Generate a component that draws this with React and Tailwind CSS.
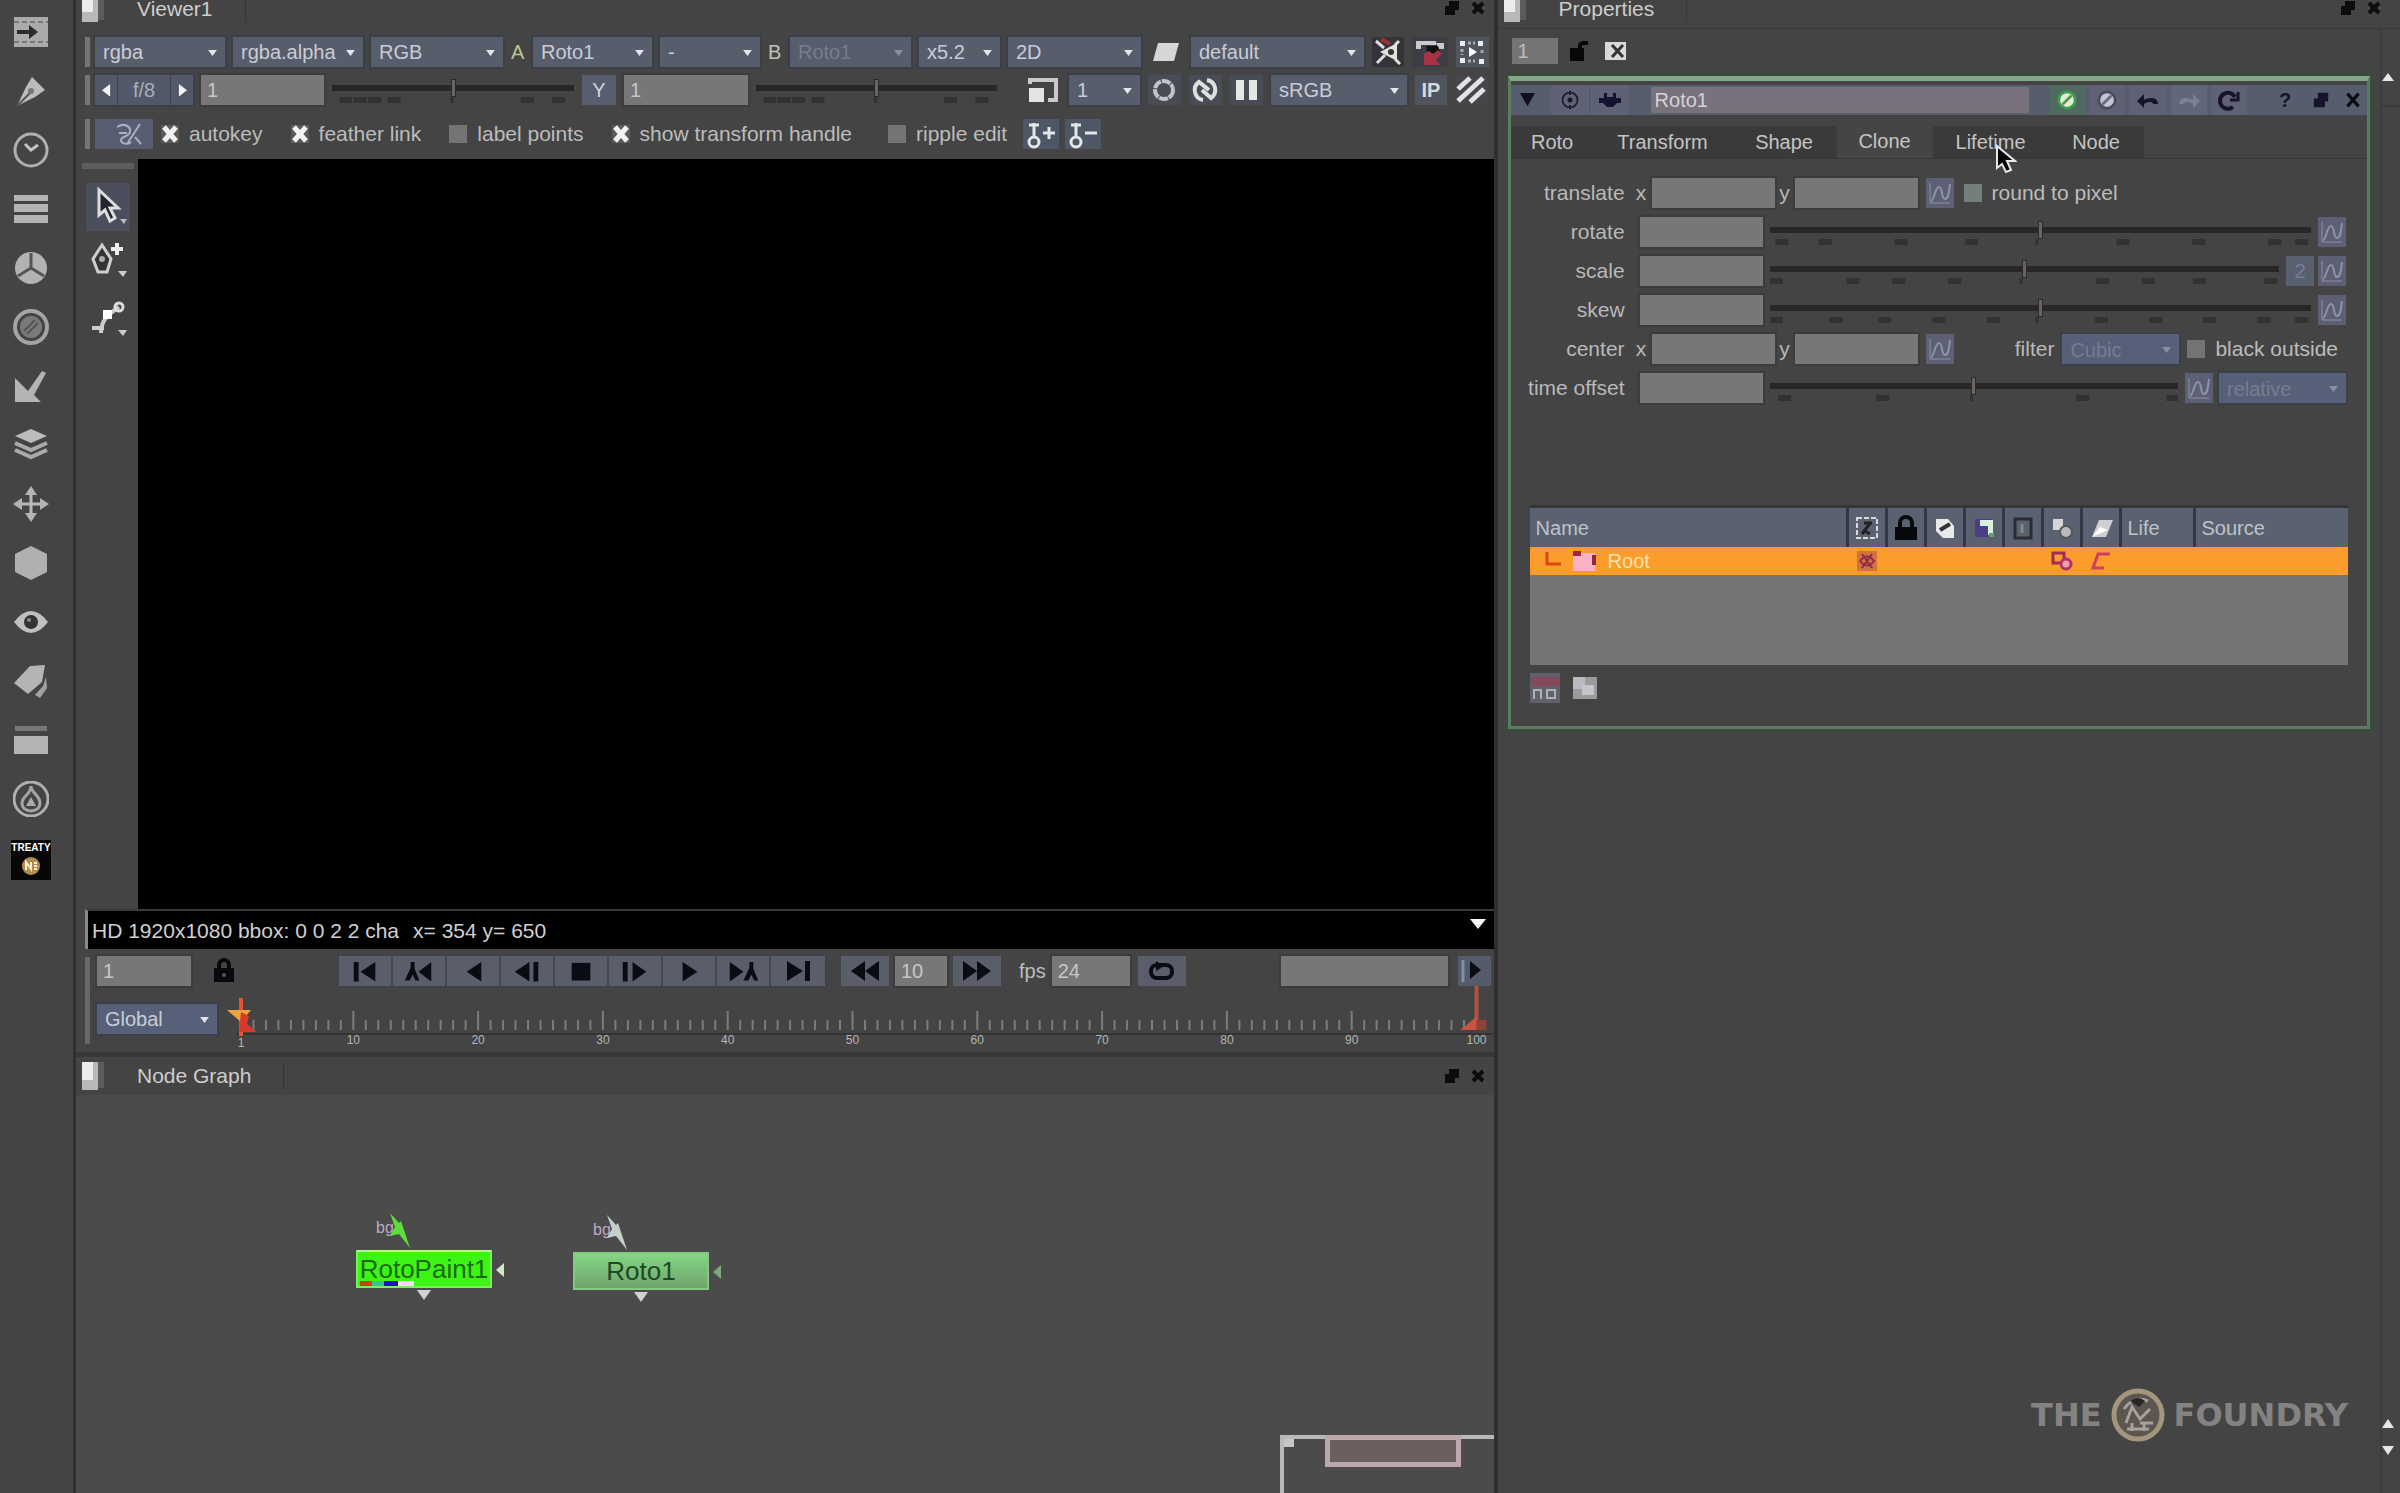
import React, { useState } from 'react';

const ROTATE_MARKS = [2, 10, 24, 37, 50, 65, 79, 93, 98];
const SCALE_MARKS = [1, 16, 25, 36, 50, 65, 74, 84, 98];
const SKEW_MARKS = [1, 12, 21, 31, 41, 50, 61, 71, 81, 91, 98];
const TIME_MARKS = [3, 27, 50, 76, 98];
const VIEWER_MARKS = [4, 10, 16, 24, 50, 79, 92];

/* ---------- shared controls ---------- */

function Select({ label, value, className = '', dim = false, blue = false }) {
  return (
    <div className={`relative shrink-0 h-[30px] ${blue ? 'bg-[#566078]' : 'bg-[#585d6b]'} shadow-[0_0_0_2px_#3b3f49] ${className}`}>
      <select
        aria-label={label}
        defaultValue={value}
        className={`w-full h-full appearance-none bg-transparent pl-2 pr-4 text-[20px] leading-[30px] outline-none ${dim ? 'text-[#767c8c]' : 'text-[#c9ccd6]'}`}
      >
        <option>{value}</option>
      </select>
      <svg viewBox="0 0 10 8" className={`absolute right-2 top-3 w-[9px] h-[7px] pointer-events-none ${dim ? 'text-[#8a90a0]' : 'text-[#e4e6ee]'}`}>
        <path d="M0 1h10L5 8z" fill="currentColor" />
      </svg>
    </div>
  );
}

function Field({ label, value = '', className = '' }) {
  return (
    <input
      type="text"
      aria-label={label}
      defaultValue={value}
      className={`shrink-0 h-[30px] bg-[#777777] px-1.5 text-[20px] text-[#c6c6c6] outline-none shadow-[0_0_0_2px_#3c3c3c] ${className}`}
    />
  );
}

function IconButton({ label, className = '', children }) {
  return (
    <button aria-label={label} className={`shrink-0 h-[30px] flex items-center justify-center ${className}`}>
      {children}
    </button>
  );
}

function Check({ label, on = false, green = false }) {
  const [checked, setChecked] = useState(on);
  return (
    <label className="relative flex items-center gap-[10px] text-[21px] leading-[30px] text-[#bcbcbc] whitespace-nowrap">
      <input
        type="checkbox"
        checked={checked}
        onChange={(e) => setChecked(e.target.checked)}
        className={`appearance-none w-[18px] h-[18px] ${green ? 'bg-[#73807a]' : 'bg-[#747474]'} checked:bg-[#5a5a5a]`}
      />
      {checked && (
        <svg viewBox="0 0 18 18" className="absolute left-0 w-[18px] h-[18px] pointer-events-none">
          <path d="M3 2l12 14M15 2L3 16" stroke="#f2f2f2" strokeWidth="5" />
        </svg>
      )}
      {label}
    </label>
  );
}

function Slider({ label, marks, className = '' }) {
  return (
    <div className={`h-[30px] min-w-0 flex flex-col pt-[10px] ${className}`}>
      <input
        type="range"
        aria-label={label}
        defaultValue={50}
        className="w-full h-[6px] appearance-none bg-[#292725] outline-none [&::-webkit-slider-thumb]:appearance-none [&::-webkit-slider-thumb]:w-[5px] [&::-webkit-slider-thumb]:h-[18px] [&::-webkit-slider-thumb]:bg-[#6a6461] [&::-webkit-slider-thumb]:border [&::-webkit-slider-thumb]:border-[#2b2929]"
      />
      <svg className="w-full h-2 mt-1.5">
        {marks.map((m) => (
          <rect key={m} x={`${m - 1}%`} y="0" width={m === 50 ? 3 : 13} height="6" fill="#323232" />
        ))}
      </svg>
    </div>
  );
}

function CurveButton({ label }) {
  return (
    <IconButton label={label} className="w-7 bg-[#5d5f74]">
      <svg viewBox="0 0 28 30" className="w-7 h-[30px]" fill="none" stroke="#8f93a6" strokeWidth="2">
        <path d="M5 23c3 0 4-14 8-14s2 12 6 12 4-8 5-15" />
        <path d="M4 5v20h20" strokeWidth="1" />
      </svg>
    </IconButton>
  );
}

// top panes sit against the window edge, so their tab is shorter
function PaneTab({ title, top = false, className = '' }) {
  return (
    <div className={`flex items-start ${className}`}>
      <svg viewBox={top ? '0 6 24 22' : '0 0 24 28'} className={top ? 'w-6 h-[22px]' : 'w-6 h-7'}>
        <rect width="16" height="28" fill="#b9b9b9" />
        <rect width="11" height="18" fill="#ececec" />
        <path d="M16 0h6v26h-6z" fill="#5c5c5c" />
      </svg>
      <div className={`px-8 -ml-px text-[21px] text-[#cdcdcd] border-r border-[#383838] ${top ? 'h-[22px] leading-[18px]' : 'h-7 leading-7'}`}>{title}</div>
      <div className={`ml-auto flex items-center gap-2.5 pr-2 ${top ? 'h-4' : 'h-7'}`}>
        <button aria-label={`Float ${title}`}>
          <svg viewBox="0 0 16 16" className="w-4 h-4"><path d="M5 1h10v9h-4v5H1V6h4z" fill="#0c0c0c" /></svg>
        </button>
        <button aria-label={`Close ${title}`}>
          <svg viewBox="0 0 16 16" className="w-4 h-4"><path d="M3 3l10 10M13 3L3 13" stroke="#0c0c0c" strokeWidth="4" /></svg>
        </button>
      </div>
    </div>
  );
}

const Grip = () => <div className="w-[5px] self-stretch shrink-0 bg-[#757575] mr-[5px]" />;

/* ---------- node menu on the far left ---------- */

const MENU = [
  ['Image', <><rect x="1" y="3" width="34" height="30" fill="#aaa" /><path d="M1 8h34M1 28h34" stroke="#777" strokeWidth="2" strokeDasharray="5 3" /><path d="M4 16h12v-5l9 7-9 7v-5H4z" fill="#2c2c2c" /></>],
  ['Draw', <><path d="M4 33L13 14 19 4 32 17 22 24z" fill="#bcbcbc" /><path d="M4 33l13-13" stroke="#555" strokeWidth="2" /><circle cx="18" cy="18" r="3" fill="#777" /></>],
  ['Time', <><circle cx="18" cy="18" r="16" fill="none" stroke="#b0b0b0" strokeWidth="3" /><path d="M12 12l6 6 7-5" fill="none" stroke="#c4c4c4" strokeWidth="3" /></>],
  ['Channel', <><path d="M1 4h34v6H1zM1 13h34v8H1zM1 24h34v8H1z" fill="#b4b4b4" /></>],
  ['Color', <><circle cx="18" cy="18" r="16" fill="#b2b2b2" /><path d="M18 3v15L5 26M18 18l13 8" fill="none" stroke="#555" strokeWidth="3" /></>],
  ['Filter', <><circle cx="18" cy="18" r="16" fill="none" stroke="#a4a4a4" strokeWidth="4" /><circle cx="18" cy="18" r="11" fill="#7a7a7a" /><path d="M11 22l11-11M14 25l11-11" stroke="#555" strokeWidth="2" /></>],
  ['Keyer', <><path d="M2 10v24h26l-7-7L33 5l-4-2-14 20z" fill="#b4b4b4" /></>],
  ['Merge', <><path d="M18 2l16 7-16 7L2 9z" fill="#bbb" /><path d="M2 16l16 7 16-7M2 23l16 7 16-7" fill="none" stroke="#aaa" strokeWidth="4" /></>],
  ['Transform', <><path d="M18 4v28M4 18h28" stroke="#bbb" strokeWidth="3" /><path d="M18 0l6 9H12zM18 36l6-9H12zM0 18l9-6v12zM36 18l-9-6v12z" fill="#b4b4b4" /></>],
  ['3D', <><path d="M18 1l16 8v18l-16 8-16-8V9z" fill="#b0b0b0" /></>],
  ['Views', <><path d="M1 18Q18-4 35 18 18 40 1 18z" fill="#c0c0c0" /><circle cx="18" cy="18" r="7" fill="#333" /><circle cx="16" cy="16" r="2" fill="#888" /></>],
  ['MetaData', <><path d="M1 20L17 3l15-1-3 17-14 12z" fill="#b4b4b4" /><path d="M33 14l-3 9-8 9 5 3 7-10z" fill="#a2a2a2" /></>],
  ['Other', <><path d="M2 4h32v5H2z" fill="#777" /><path d="M1 14h34v18H1z" fill="#b4b4b4" /></>],
  ['FurnaceCore', <><circle cx="18" cy="18" r="17" fill="none" stroke="#b0b0b0" strokeWidth="3" /><path d="M18 5c0 7 9 9 9 17 0 5-4 8-9 8s-9-3-9-8c0-7 9-8 9-17z" fill="none" stroke="#a4a4a4" strokeWidth="3" /><path d="M18 16l5 9H13z" fill="#aaa" /></>],
];

function NodeMenu() {
  return (
    <nav className="w-[76px] shrink-0 border-r-[3px] border-[#303030] pl-[13px] pt-[14px] flex flex-col gap-[23px]">
      {MENU.map(([name, icon]) => (
        <button key={name} aria-label={name} className="w-9 h-9">
          <svg viewBox="0 0 36 36" className="w-9 h-9">{icon}</svg>
        </button>
      ))}
      <button aria-label="Nukepedia" className="w-10 h-10 -ml-0.5 bg-[#070707] flex flex-col items-center">
        <span className="text-[10px] leading-4 font-bold text-white">TREATY</span>
        <svg viewBox="0 0 20 20" className="w-5 h-5">
          <circle cx="10" cy="10" r="9" fill="#b58b50" />
          <path d="M5 14V6l5 7V6M13 7h3M13 10h3M13 13h3" stroke="#fff0cc" strokeWidth="2" fill="none" />
        </svg>
      </button>
    </nav>
  );
}

/* ---------- viewer ---------- */

function ViewerToolbars() {
  return (
    <div className="pt-[9px] pb-[10px] pl-[9px] flex flex-col gap-2 text-[20px] overflow-hidden">
      <div className="flex">
        <Grip />
        <div className="flex gap-2 leading-[30px]">
          <Select label="Channels" value="rgba" className="w-[130px]" />
          <Select label="Alpha channel" value="rgba.alpha" className="w-[130px]" />
          <Select label="Display channels" value="RGB" className="w-[132px]" />
          <span className="w-[14px] text-[#b7c78f]">A</span>
          <Select label="A input" value="Roto1" className="w-[119px]" />
          <Select label="Wipe" value="-" className="w-[100px]" />
          <span className="w-[14px] text-[#c2c2b8]">B</span>
          <Select label="B input" value="Roto1" dim className="w-[121px]" />
          <Select label="Zoom" value="x5.2" className="w-[81px]" />
          <Select label="View mode" value="2D" className="w-[133px]" />
          <IconButton label="Camera lock" className="w-[34px]">
            <svg viewBox="0 0 34 30" className="w-[34px]"><path d="M9 6h21l-5 18H4z" fill="#d6d6d6" /></svg>
          </IconButton>
          <Select label="Camera" value="default" className="w-[173px]" />
          <IconButton label="Region of interest" className="w-8 bg-[#33343a]">
            <svg viewBox="0 0 32 30" className="w-8"><path d="M4 4l8 7M5 26l8-8M27 4l-4 4M23 22l5 5" stroke="#ddd" strokeWidth="3" /><path d="M25 6v18L8 15z" fill="#e2e2d8" /><circle cx="19" cy="15" r="3" fill="#333" /><path d="M9 2l9 5" stroke="#963434" strokeWidth="4" /></svg>
          </IconButton>
          <IconButton label="Proxy" className="w-9 bg-[#3c3e46]">
            <svg viewBox="0 0 36 30" className="w-9"><path d="M4 4h20v4H9v4H4zM24 6h8v6h-5z" fill="#c9c9c9" /><path d="M14 9h12l2 6-12 3z" fill="#111" /><path d="M12 17l5-3 4 3 5-4 4 4-6 5 4 6H12z" fill="#a93344" /></svg>
          </IconButton>
          <IconButton label="Guides" className="w-[33px] bg-[#50545f]">
            <svg viewBox="0 0 33 30" className="w-[33px]"><path d="M4 4h5v5H4zM22 4h5v5h-5zM4 21h5v5H4zM23 22h5v5h-5z" fill="#ececec" /><path d="M12 6h7M6 12v6M12 24h7M26 13v5" stroke="#a8abb4" strokeWidth="3" strokeDasharray="3 2" /><path d="M13 10l8 5-8 5z" fill="#fff" /></svg>
          </IconButton>
        </div>
      </div>
      <div className="flex">
        <Grip />
        <div className="flex gap-2 leading-[30px]">
          <div className="flex w-[98px] bg-[#535868] text-[#a9aebd] shadow-[0_0_0_2px_#3b3f49]">
            <IconButton label="Stop down" className="w-[22px]"><svg viewBox="0 0 10 14" className="w-[9px]"><path d="M9 0v14L0 7z" fill="#f4f4f4" /></svg></IconButton>
            <span className="flex-1 text-center border-x border-[#3f4350]">f/8</span>
            <IconButton label="Stop up" className="w-[22px]"><svg viewBox="0 0 10 14" className="w-[9px]"><path d="M1 0v14l9-7z" fill="#f4f4f4" /></svg></IconButton>
          </div>
          <Field label="Gain" value="1" className="w-[123px]" />
          <Slider label="Gain slider" marks={VIEWER_MARKS} className="w-[242px]" />
          <IconButton label="Gamma toggle" className="w-[34px] bg-[#585d70] text-[#d2d4dc]">Y</IconButton>
          <Field label="Gamma" value="1" className="w-[124px]" />
          <Slider label="Gamma slider" marks={VIEWER_MARKS} className="w-[241px] mr-5" />
          <IconButton label="Downrez" className="w-9">
            <svg viewBox="0 0 36 30" className="w-9"><path d="M7 5h24v20h-8" fill="none" stroke="#c9c9c9" strokeWidth="4" /><path d="M4 13h15v14H4z" fill="#e4e4e4" /><path d="M5 3v6" stroke="#ccc" strokeWidth="4" /></svg>
          </IconButton>
          <Select label="Proxy scale" value="1" className="w-[71px]" />
          <IconButton label="Mask" className="w-[33px] bg-[#484c57]">
            <svg viewBox="0 0 33 30" className="w-[33px]"><circle cx="16" cy="15" r="9" fill="none" stroke="#c4c4c8" strokeWidth="4" strokeDasharray="9 1" /></svg>
          </IconButton>
          <IconButton label="Refresh" className="w-[33px] bg-[#484c57]">
            <svg viewBox="0 0 33 30" className="w-[33px]" fill="none" stroke="#e0e0e0" strokeWidth="4"><path d="M14 25A10 10 0 0 1 10 7l10 8" /><path d="M18 5a10 10 0 0 1 4 18l-9-8" /></svg>
          </IconButton>
          <IconButton label="Pause" className="w-[33px] bg-[#484c57]">
            <svg viewBox="0 0 33 30" className="w-[33px]"><path d="M6 5h8v20H6zM19 5h8v20h-8z" fill="#e6e6e6" /></svg>
          </IconButton>
          <Select label="Viewer process" value="sRGB" className="w-[136px]" />
          <IconButton label="Input process" className="w-8 bg-[#50545f] font-bold text-[#d5d9dc]">IP</IconButton>
          <IconButton label="Zebra" className="w-[33px] bg-[#44464c]">
            <svg viewBox="0 0 33 30" className="w-[33px]"><path d="M3 14L15 3M3 26L28 3M15 27l14-13" stroke="#e2e2e2" strokeWidth="5" /></svg>
          </IconButton>
        </div>
      </div>
      <div className="flex mt-1.5">
        <Grip />
        <IconButton label="Hide overlay" className="w-[58px] bg-[#585d72] mr-2">
          <svg viewBox="0 0 58 30" className="w-[58px]" fill="none" stroke="#a9aec0" strokeWidth="2"><path d="M22 8c8-5 14 0 13 5s-9 4-9 8 7 5 10 2M24 14h8M45 5L32 25M40 18l6 7" /></svg>
        </IconButton>
        <div className="flex gap-7">
          <Check label="autokey" on />
          <Check label="feather link" on />
          <Check label="label points" />
          <Check label="show transform handle" on />
          <div className="ml-2"><Check label="ripple edit" /></div>
        </div>
        <div className="flex gap-1.5 ml-4">
          <IconButton label="Add key" className="w-9 bg-[#4e5766]">
            <svg viewBox="0 0 36 30" className="w-9" fill="none" stroke="#e6e6e6" strokeWidth="3"><circle cx="11" cy="23" r="5" /><path d="M11 18V4M6 6h10M20 14h12M26 8v12" /></svg>
          </IconButton>
          <IconButton label="Remove key" className="w-9 bg-[#4e5766]">
            <svg viewBox="0 0 36 30" className="w-9" fill="none" stroke="#e6e6e6" strokeWidth="3"><circle cx="11" cy="23" r="5" /><path d="M11 18V4M6 6h10M20 14h12" /></svg>
          </IconButton>
        </div>
      </div>
    </div>
  );
}

const TRANSPORT = [
  ['First frame', <><path d="M15 5h5v20h-5zM37 5v20L22 15z" /></>],
  ['Previous key', <><path d="M39 5v20L26 15z" /><path d="M18 5v6l-6 13h5l3-6 3 6h4l-5-12V5z" /></>],
  ['Play backward', <path d="M35 5v20L20 15z" />],
  ['Step back', <><path d="M29 5v20L14 15zM33 5h5v20h-5z" /></>],
  ['Stop', <path d="M17 6h19v18H17z" />],
  ['Step forward', <><path d="M14 5h5v20h-5zM24 5v20l14-10z" /></>],
  ['Play forward', <path d="M20 5v20l15-10z" />],
  ['Next key', <><path d="M13 5v20l14-10z" /><path d="M33 5v6l-6 13h5l3-6 3 6h4l-5-12V5z" /></>],
  ['Last frame', <><path d="M15 5v20l16-10zM33 5h5v20h-5z" /></>],
];

function Timeline() {
  const at = (f) => `${(1.88 + (f - 1) * 0.9776).toFixed(3)}%`;
  const frames = Array.from({ length: 100 }, (_, i) => i + 1);
  return (
    <svg className="flex-1 min-w-0 h-[66px]" fontFamily="Liberation Sans, Arial, sans-serif">
      {frames.map((f) => (
        <line key={f} x1={at(f)} x2={at(f)} y1={f % 10 === 0 ? 25 : 34} y2="44" stroke="#7c7c7c" strokeWidth="2" />
      ))}
      <line x1="1.5%" x2="100%" y1="48" y2="48" stroke="#333" strokeWidth="2" />
      {frames.filter((f) => f % 10 === 0).map((f) => (
        <text key={f} x={at(f)} y="58" textAnchor="middle" fontSize="12" fill="#b4b4b4">{f}</text>
      ))}
      <text x={at(1)} y="61" textAnchor="middle" fontSize="12" fill="#b6c08e">1</text>
      <svg x={at(1)} overflow="visible">
        <path d="M0 12v38" stroke="#e8542c" strokeWidth="4" />
        <path d="M-14 24h24l-10 12z" fill="#f0a23c" />
        <path d="M0 26l8 4-2 8 10 8H-2z" fill="#d8392a" />
      </svg>
      <svg x={at(100)} overflow="visible">
        <path d="M0 0v44" stroke="#b4523f" strokeWidth="4" />
        <path d="M0 30v14h-16l12-10z" fill="#cc5340" />
        <path d="M0 34h10v10H0z" fill="#8f4236" />
      </svg>
    </svg>
  );
}

function Viewer() {
  return (
    <section className="flex-[1056_1_0%] min-h-0 flex flex-col border-b-[5px] border-[#383838]">
      <PaneTab title="Viewer1" top className="mb-1.5 pl-[6px]" />
      <ViewerToolbars />
      <div className="flex-1 min-h-0 flex">
        <div className="w-[62px] shrink-0 flex flex-col pt-1">
          <div className="h-1.5 ml-1.5 mr-1 bg-[#5c5e60]" />
          <button aria-label="Select all" className="ml-2.5 mt-3.5 w-11 h-12 bg-[#4b4e5c]">
            <svg viewBox="0 0 44 48" className="w-11 h-12"><path d="M13 7v25l6-5 5 11 5-3-5-10h8z" fill="#23242c" stroke="#ddd" strokeWidth="3" /><path d="M34 36h7l-3 5z" fill="#bbb" /></svg>
          </button>
          <button aria-label="Add points" className="ml-2.5 mt-2 w-11 h-12">
            <svg viewBox="0 0 44 48" className="w-11 h-12"><path d="M16 6l9 14-4 13h-9L7 20z" fill="#333" stroke="#cfcfcf" strokeWidth="3" /><circle cx="16" cy="20" r="3" fill="#aaa" /><path d="M31 4v12M25 10h12" stroke="#eee" strokeWidth="4" /><path d="M32 32h9l-4 6z" fill="#ccc" /></svg>
          </button>
          <button aria-label="Bezier" className="ml-2.5 mt-2 w-11 h-12">
            <svg viewBox="0 0 44 48" className="w-11 h-12"><path d="M15 38c0-12 6-18 18-26M6 33h12" fill="none" stroke="#ccc" strokeWidth="4" /><path d="M17 15h9v9h-9z" fill="#fff" /><circle cx="33" cy="12" r="4" fill="none" stroke="#ddd" strokeWidth="3" /><path d="M32 35h9l-4 6z" fill="#ccc" /></svg>
          </button>
        </div>
        <div className="flex-1 bg-black" />
      </div>
      <div className="ml-[9px] h-10 border-t-2 border-l-[3px] border-t-[#3a3a3a] border-l-[#8a8a8a] bg-black flex items-center gap-[14px] pl-1 pr-2 text-[21px] text-[#d0d0d0]">
        <span>HD 1920x1080 bbox: 0 0 2 2 cha</span>
        <span>x= 354 y= 650</span>
        <svg viewBox="0 0 16 10" className="w-4 h-2.5 ml-auto self-start mt-2"><path d="M0 0h16L8 10z" fill="#f5f5f5" /></svg>
      </div>
      <div className="ml-[9px] flex">
        <div className="w-[5px] bg-[#686868] mr-[7px] my-2 shrink-0" />
        <div className="flex-1 min-w-0">
          <div className="flex pt-[7px]">
            <Field label="Current frame" value="1" className="w-[94px]" />
            <IconButton label="Lock range" className="w-[50px] ml-2">
              <svg viewBox="0 0 24 26" className="w-6 h-[26px]"><path d="M2 10h20v14H2z" fill="#08090f" /><path d="M7 11V7a5 5 0 0 1 10 0v4" fill="none" stroke="#08090f" strokeWidth="4" /><circle cx="12" cy="17" r="2" fill="#555" /></svg>
            </IconButton>
            <div className="ml-[90px] flex divide-x-2 divide-[#43475a] shadow-[0_0_0_2px_#3f424b]">
              {TRANSPORT.map(([name, icon]) => (
                <IconButton key={name} label={name} className="w-[54px] bg-[#5a5e6b]">
                  <svg viewBox="0 0 53 30" className="w-[53px]" fill="#0a0c14">{icon}</svg>
                </IconButton>
              ))}
            </div>
            <div className="ml-4 flex gap-1.5">
              <IconButton label="Skip back" className="w-[48px] bg-[#5a5e6b]">
                <svg viewBox="0 0 48 30" className="w-12" fill="#0a0c14"><path d="M24 5v20L10 15zM38 5v20L24 15z" /></svg>
              </IconButton>
              <Field label="Skip amount" value="10" className="w-[52px]" />
              <IconButton label="Skip forward" className="w-[48px] bg-[#5a5e6b]">
                <svg viewBox="0 0 48 30" className="w-12" fill="#0a0c14"><path d="M10 5v20l14-10zM24 5v20l14-10z" /></svg>
              </IconButton>
            </div>
            <label className="ml-[18px] flex items-center gap-1.5 text-[20px] text-[#bdbdbd]">fps<Field label="fps" value="24" className="w-[78px]" /></label>
            <IconButton label="Loop" className="w-[48px] ml-2 bg-[#5a5e6b]">
              <svg viewBox="0 0 48 30" className="w-12"><rect x="13" y="9" width="21" height="13" rx="6" fill="none" stroke="#0a0c14" strokeWidth="4" /><path d="M18 5l8 5-8 5z" fill="#0a0c14" /></svg>
            </IconButton>
            <Field label="Cache range" className="w-[167px] ml-auto" />
            <IconButton label="Flipbook" className="w-[33px] ml-2.5 mr-[3px] bg-[#565b6b]">
              <svg viewBox="0 0 33 30" className="w-[33px]"><path d="M12 5v18l11-9z" fill="#0a0c14" /><path d="M5 4v22" stroke="#7695a5" strokeWidth="3" /></svg>
            </IconButton>
          </div>
          <div className="flex">
            <Select label="Range" value="Global" blue className="w-[120px] mt-[18px]" />
            <Timeline />
          </div>
        </div>
      </div>
    </section>
  );
}

/* ---------- node graph ---------- */

function GraphNode({ name, selected = false, className = '' }) {
  return (
    <div className={`absolute w-[136px] ${className}`}>
      <div className="relative h-[38px]">
        <span className="absolute left-5 top-1 text-[16px] text-[#bda9c4]">bg</span>
        <svg viewBox="0 0 30 38" className="absolute left-[30px] top-0 w-[30px] h-[38px]">
          <path d="M4 1l9 10 2-2 4 12 5 15L13 22l-9 2 5-9z" fill={selected ? '#59e03a' : '#c3d0cc'} />
        </svg>
      </div>
      <div className={`relative h-[38px] text-center text-[26px] leading-[38px] border-2 ${selected ? 'bg-[#3df515] border-t-[#b4f59c] border-[#7cf05c] text-[#1d6a14]' : 'bg-linear-to-b from-[#86d684] to-[#6fa56c] border-[#84c981] text-[#1c4a26]'} flex items-center justify-center`}>
        {name}
        {selected && (
          <div className="absolute left-0.5 bottom-0 h-[5px] flex">
            <i className="w-3 bg-[#d83a0c]" /><i className="w-3 bg-[#35c78c]" /><i className="w-3.5 bg-[#1616c4]" /><i className="w-4 bg-[#f5dff0]" />
          </div>
        )}
      </div>
      <svg viewBox="0 0 14 10" className="w-[14px] h-2.5 mx-auto mt-0.5"><path d="M0 0h14L7 10z" fill="#d2d2d2" /></svg>
      <svg viewBox="0 0 8 14" className="absolute -right-3 top-[51px] w-2 h-3.5"><path d="M8 0v14L0 7z" fill={selected ? '#cfe8c8' : '#79a878'} /></svg>
    </div>
  );
}

function NodeGraph() {
  return (
    <section className="flex-[437_1_0%] min-h-0 flex flex-col">
      <PaneTab title="Node Graph" className="pt-[5px] pb-[5px] pl-[6px]" />
      <div className="relative flex-1 bg-[#4b4b4b] overflow-hidden">
        <GraphNode name="RotoPaint1" selected className="left-[280px] top-[117px]" />
        <GraphNode name="Roto1" className="left-[497px] top-[119px]" />
        <div className="absolute right-0 bottom-0 w-[214px] h-[58px] border-t-4 border-l-4 border-[#b9b9b9]">
          <div className="w-2.5 h-2 bg-[#c6c6c6]" />
          <div className="absolute left-[41px] -top-1 w-[136px] h-8 border-[5px] border-[#bba9ab] bg-[#6b5f60]" />
        </div>
      </div>
    </section>
  );
}

/* ---------- properties ---------- */

const TABS = [
  ['Roto', 'w-[83px]'],
  ['Transform', 'w-[138px]'],
  ['Shape', 'w-[105px]'],
  ['Clone', 'w-[96px]'],
  ['Lifetime', 'w-[116px]'],
  ['Node', 'w-[95px]'],
];

function Knob({ label, children }) {
  return (
    <div className="flex items-center h-[30px] text-[21px] text-[#b9b9b9]">
      <span className="w-[114px] shrink-0 text-right whitespace-nowrap leading-[30px]">{label}</span>
      {children}
    </div>
  );
}

function XY({ name }) {
  return (
    <>
      <span className="w-[27px] text-center shrink-0 pl-1.5">x</span>
      <Field label={`${name} x`} className="w-[123px]" />
      <span className="w-5 text-center shrink-0">y</span>
      <Field label={`${name} y`} className="w-[123px] mr-2" />
      <CurveButton label={`${name} animation`} />
    </>
  );
}

function CloneKnobs() {
  return (
    <div className="pt-[19px] pr-[21px] flex flex-col gap-[9px]">
      <Knob label="translate">
        <XY name="translate" />
        <div className="ml-2.5"><Check label="round to pixel" green /></div>
      </Knob>
      <Knob label="rotate">
        <Field label="rotate" className="w-[123px] ml-[15px]" />
        <Slider label="rotate slider" marks={ROTATE_MARKS} className="flex-1 mx-[7px]" />
        <CurveButton label="rotate animation" />
      </Knob>
      <Knob label="scale">
        <Field label="scale" className="w-[123px] ml-[15px]" />
        <Slider label="scale slider" marks={SCALE_MARKS} className="flex-1 mx-[7px]" />
        <IconButton label="Split scale" className="w-7 mr-1 bg-[#596070] text-[#757d94]">2</IconButton>
        <CurveButton label="scale animation" />
      </Knob>
      <Knob label="skew">
        <Field label="skew" className="w-[123px] ml-[15px]" />
        <Slider label="skew slider" marks={SKEW_MARKS} className="flex-1 mx-[7px]" />
        <CurveButton label="skew animation" />
      </Knob>
      <Knob label="center">
        <XY name="center" />
        <div className="ml-auto mr-2 flex items-center gap-2">
          <span>filter</span>
          <Select label="filter" value="Cubic" dim blue className="w-[117px]" />
          <Check label="black outside" />
        </div>
      </Knob>
      <Knob label="time offset">
        <Field label="time offset" className="w-[123px] ml-[15px]" />
        <Slider label="time offset slider" marks={TIME_MARKS} className="flex-1 mx-[7px]" />
        <CurveButton label="time offset animation" />
        <Select label="offset mode" value="relative" dim blue className="w-[127px] ml-1.5" />
      </Knob>
    </div>
  );
}

const COLUMN_ICONS = [
  ['Visible', <><rect x="3" y="3" width="20" height="20" fill="none" stroke="#d8d8d8" strokeWidth="2" strokeDasharray="5 2" /><path d="M8 19l9-12M10 8h8M9 15l7 4" stroke="#222" strokeWidth="3" /></>],
  ['Locked', <><path d="M2 12h22v13H2z" fill="#08090d" /><path d="M7 12V8a6 6 0 0 1 12 0v4" fill="none" stroke="#08090d" strokeWidth="4" /></>],
  ['Overlay', <><path d="M4 4h12l6 7v12H11l-7-7z" fill="#e9e9e9" /><path d="M8 15l10-6" stroke="#333" strokeWidth="4" /></>],
  ['Color', <><path d="M4 4h18v18H4z" fill="#4c3e86" /><path d="M9 5h13v15h-5V11H9z" fill="#d9f0dc" /><path d="M18 20h5" stroke="#53a85f" strokeWidth="4" /></>],
  ['Invert', <><rect x="5" y="4" width="16" height="19" fill="none" stroke="#2c2c34" strokeWidth="3" /><path d="M12 9v9" stroke="#888" strokeWidth="3" /></>],
  ['Blending', <><path d="M4 4h10v11H4z" fill="#d6d6d6" /><circle cx="17" cy="17" r="6" fill="#b9b9c0" stroke="#555" strokeWidth="2" /></>],
  ['Motion blur', <><path d="M11 5h14l-7 17H4z" fill="#cfcfcf" /><path d="M4 22l8-10 8 3" fill="#fff" /></>],
];

function ShapeTable() {
  return (
    <div className="mt-[105px] mx-[19px]">
      <div className="h-[157px] bg-[#757575] shadow-[0_-3px_0_#343638]">
        <table className="w-full table-fixed border-collapse text-[20px]">
          <thead>
            <tr className="h-[39px] bg-[#5a6170] text-left text-[#bfc3c8]">
              <th scope="col" className="font-normal pl-1.5 border-r-[3px] border-[#343741]">Name</th>
              {COLUMN_ICONS.map(([name, icon]) => (
                <th key={name} scope="col" aria-label={name} className="w-[39px] border-r-[3px] border-[#343741]">
                  <svg viewBox="0 0 26 26" className="w-[26px] h-[26px] mx-auto">{icon}</svg>
                </th>
              ))}
              <th scope="col" className="w-[74px] font-normal pl-1.5 border-r-[3px] border-[#343741]">Life</th>
              <th scope="col" className="w-[154px] font-normal pl-1.5">Source</th>
            </tr>
          </thead>
          <tbody>
            <tr className="h-[28px] bg-[#fb9c2d] text-[#ffe2a8]">
              <td>
                <div className="flex items-center gap-2.5 pl-3.5">
                  <svg viewBox="0 0 18 18" className="w-[18px] h-[18px]"><path d="M3 0v12h14" fill="none" stroke="#d84a14" strokeWidth="3" /></svg>
                  <svg viewBox="0 0 26 24" className="w-[26px] h-6"><path d="M1 4h22v18H1z" fill="#f8b4c4" /><path d="M1 2h8v5H1z" fill="#9b2450" /><path d="M20 6h4v10h-4z" fill="#8f2a3c" /></svg>
                  <span className="leading-7">Root</span>
                </div>
              </td>
              <td><svg viewBox="0 0 26 24" className="w-[26px] h-6 mx-auto"><path d="M3 2h20v20H3z" fill="#d5713d" /><path d="M6 12q7-9 14 0-7 9-14 0M8 5l10 14M18 5L8 19" fill="none" stroke="#8c2c4c" strokeWidth="2" /></svg></td>
              <td /><td /><td /><td />
              <td><svg viewBox="0 0 26 24" className="w-[26px] h-6 mx-auto"><path d="M4 4h11v10H4z" fill="none" stroke="#a02a58" strokeWidth="3" /><circle cx="17" cy="15" r="5" fill="#f0a0a0" stroke="#b03070" strokeWidth="3" /></svg></td>
              <td><svg viewBox="0 0 26 24" className="w-[26px] h-6 mx-auto"><path d="M22 5H10L5 19h11" fill="none" stroke="#cf3d62" strokeWidth="3" /></svg></td>
              <td /><td />
            </tr>
          </tbody>
        </table>
      </div>
      <div className="mt-2 flex gap-2.5">
        <IconButton label="Add layer" className="w-[30px] bg-[#60616c]">
          <svg viewBox="0 0 30 30" className="w-[30px]"><path d="M1 4h28v9H1z" fill="#86495c" /><path d="M4 26V17h7v9M17 17h8v8h-8z" fill="none" stroke="#a9b4b6" strokeWidth="2" /></svg>
        </IconButton>
        <IconButton label="Remove layer" className="w-[30px]">
          <svg viewBox="0 0 30 30" className="w-[30px]"><path d="M3 4h24v22H3z" fill="#9a9ca2" /><path d="M3 4h12v12H3z" fill="#b9bbc0" /><path d="M12 12h12v10H12z" fill="#c4c6ca" /></svg>
        </IconButton>
      </div>
    </div>
  );
}

function PanelHeader() {
  return (
    <div className="h-[30px] bg-[#565d6c] flex items-center">
      <IconButton label="Collapse" className="w-[34px]"><svg viewBox="0 0 18 16" className="w-[15px]"><path d="M0 0h18L9 16z" fill="#10111c" /></svg></IconButton>
      <IconButton label="Center node" className="w-[38px] ml-1.5 bg-[#5e6274]">
        <svg viewBox="0 0 24 24" className="w-5 h-5"><circle cx="12" cy="12" r="9" fill="none" stroke="#171a28" strokeWidth="2" /><circle cx="12" cy="12" r="3" fill="#171a28" /><path d="M12 1v5M12 18v5" stroke="#171a28" strokeWidth="2" /></svg>
      </IconButton>
      <IconButton label="Input" className="w-[38px] ml-0.5 bg-[#5e6274]">
        <svg viewBox="0 0 24 20" className="w-6"><path d="M1 8h5V3h3v4h6V3h3v5h5v5h-4l-4 4H9l-4-4H1z" fill="#141230" /></svg>
      </IconButton>
      <input type="text" aria-label="Node name" defaultValue="Roto1" className="flex-1 min-w-0 ml-[22px] h-[26px] bg-[#77727c] px-1 text-[20px] text-[#d5d3da] outline-none" />
      <div className="ml-5 flex gap-1">
        <IconButton label="Enable" className="w-9 bg-[#4f6b5f]"><svg viewBox="0 0 24 24" className="w-[22px]"><circle cx="12" cy="12" r="9" fill="#e2ecd9" stroke="#3d9c48" strokeWidth="3" /><path d="M7 17l10-10" stroke="#4f9d4c" strokeWidth="3" /></svg></IconButton>
        <IconButton label="Disable" className="w-9 bg-[#5e6274]"><svg viewBox="0 0 24 24" className="w-[22px]"><circle cx="12" cy="12" r="9" fill="#c6c4d2" stroke="#4a4c5e" strokeWidth="3" /><path d="M7 17l10-10" stroke="#66687c" strokeWidth="3" /></svg></IconButton>
        <IconButton label="Undo" className="w-[38px] bg-[#5e6274]"><svg viewBox="0 0 24 20" className="w-6"><path d="M22 14c0-7-9-7-14-4V4L1 11l7 7v-4c5-3 9-2 9 0z" fill="#16142c" /></svg></IconButton>
        <IconButton label="Redo" className="w-9 bg-[#61667a]"><svg viewBox="0 0 24 20" className="w-6"><path d="M2 14c0-7 9-7 14-4V4l7 7-7 7v-4c-5-3-9-2-9 0z" fill="#7b8093" /></svg></IconButton>
        <IconButton label="Revert" className="w-9 bg-[#5e6274]"><svg viewBox="0 0 24 24" className="w-6" fill="none" stroke="#16142c" strokeWidth="4"><path d="M16 19A8 8 0 1 1 18 9" /><path d="M21 4v8h-8" strokeWidth="3" /></svg></IconButton>
      </div>
      <div className="ml-5 flex">
        <IconButton label="Help" className="w-9 text-[20px] font-bold text-[#16142c]">?</IconButton>
        <IconButton label="Float" className="w-9"><svg viewBox="0 0 20 20" className="w-[16px]"><path d="M6 1h13v11h-4v7H1V8h5z" fill="#16142c" /></svg></IconButton>
        <IconButton label="Close" className="w-7"><svg viewBox="0 0 20 20" className="w-[16px]"><path d="M3 2l14 16M17 2L3 18" stroke="#0d0d14" strokeWidth="4" /></svg></IconButton>
      </div>
    </div>
  );
}

function RotoPanel() {
  const [active, setActive] = useState('Clone');
  return (
    <div className="h-[653px] border-x-[3px] border-b-[3px] border-t-[5px] border-[#5f7c62] border-t-[#84a888] shadow-[0_0_0_3px_#3a4a3b]">
      <div className="pt-1">
        <PanelHeader />
      </div>
      <div className="relative">
        <div role="tablist" className="flex mt-[11px] h-[33px] border-b border-[#383838]">
          {TABS.map(([name, width]) => (
            <button
              key={name}
              role="tab"
              aria-selected={active === name}
              onClick={() => setActive(name)}
              className={`${width} text-[20px] text-[#c4c4c4] ${active === name ? 'bg-[#454545] pb-1' : 'bg-[#3a3a3a]'}`}
            >
              {name}
            </button>
          ))}
        </div>
        <svg viewBox="0 0 22 30" className="absolute left-[484px] top-[18px] w-[22px] h-[30px] pointer-events-none">
          <path d="M2 2v22l5-4 4 8 5-2-4-9h8z" fill="#050505" stroke="#e6e6e6" strokeWidth="2" />
        </svg>
      </div>
      <CloneKnobs />
      <ShapeTable />
    </div>
  );
}

function Properties() {
  return (
    <section className="flex-[904_1_0%] min-w-0 flex flex-col">
      <PaneTab title="Properties" top className="pl-[6px] pr-[10px] pb-1.5 border-b border-[#3a3a3a]" />
      <div className="flex-1 flex min-h-0">
        <div className="flex-1 min-w-0 flex flex-col pl-[10px] pr-[10px]">
          <div className="flex items-center h-[26px] mt-[9px] mb-3 pl-1">
            <input type="text" aria-label="Max panels" defaultValue="1" className="w-[46px] h-[26px] bg-[#747474] px-1.5 text-[20px] text-[#bdbdbd] outline-none" />
            <button aria-label="Lock panels" className="ml-2.5">
              <svg viewBox="0 0 24 22" className="w-6 h-[22px]"><path d="M2 8h14v13H2z" fill="#080808" /><path d="M12 9V6q0-3 4-3h4" fill="none" stroke="#080808" strokeWidth="4" /></svg>
            </button>
            <button aria-label="Clear panels" className="ml-3">
              <svg viewBox="0 0 24 20" className="w-6 h-5"><path d="M1 1h21v18H1z" fill="#d9d9d9" /><path d="M8 4l11 12M19 4L8 16" stroke="#333" strokeWidth="3" /></svg>
            </button>
          </div>
          <RotoPanel />
          <div className="mt-auto mb-[50px] mr-[22px] flex items-center justify-end gap-2 font-['DejaVu_Sans'] font-bold text-[32px] leading-none text-[#858381]">
            <span>THE</span>
            <svg viewBox="0 0 56 56" className="w-14 h-14">
              <circle cx="28" cy="28" r="24" fill="#5b564f" stroke="#a3967c" strokeWidth="5" />
              <path d="M14 22q10-14 24-8M16 36l6-16 8 12 10-10M30 36h13M17 42h22M22 36v8M34 36v8" fill="none" stroke="#a7a09c" strokeWidth="3" />
              <path d="M20 14q8-6 15 0l-6 6z" fill="#262626" />
            </svg>
            <span>FOUNDRY</span>
          </div>
        </div>
        <div className="w-[20px] shrink-0 border-l-2 border-[#3b3b41] flex flex-col items-start">
          <button aria-label="Scroll to top" className="w-full h-[78px] pt-[44px] pb-[26px] border-b-2 border-[#3a3a3a]"><svg viewBox="0 0 12 8" className="w-3 h-2"><path d="M0 8h12L6 0z" fill="#e6e6e6" /></svg></button>
          <button aria-label="Scroll up" className="mt-auto"><svg viewBox="0 0 12 9" className="w-3 h-[9px]"><path d="M0 9h12L6 0z" fill="#e6e6e6" /></svg></button>
          <button aria-label="Scroll down" className="mt-[18px] mb-[38px]"><svg viewBox="0 0 12 9" className="w-3 h-[9px]"><path d="M0 0h12L6 9z" fill="#e6e6e6" /></svg></button>
        </div>
      </div>
    </section>
  );
}

function App() {
  return (
    <div className="h-screen flex overflow-hidden bg-[#444444] font-['Liberation_Sans',Arial,sans-serif] text-[#c8c8c8]">
      <NodeMenu />
      <main className="flex-[1420_1_0%] min-w-0 flex flex-col border-r-4 border-[#2f2f2f]">
        <Viewer />
        <NodeGraph />
      </main>
      <Properties />
    </div>
  );
}

export default App;
